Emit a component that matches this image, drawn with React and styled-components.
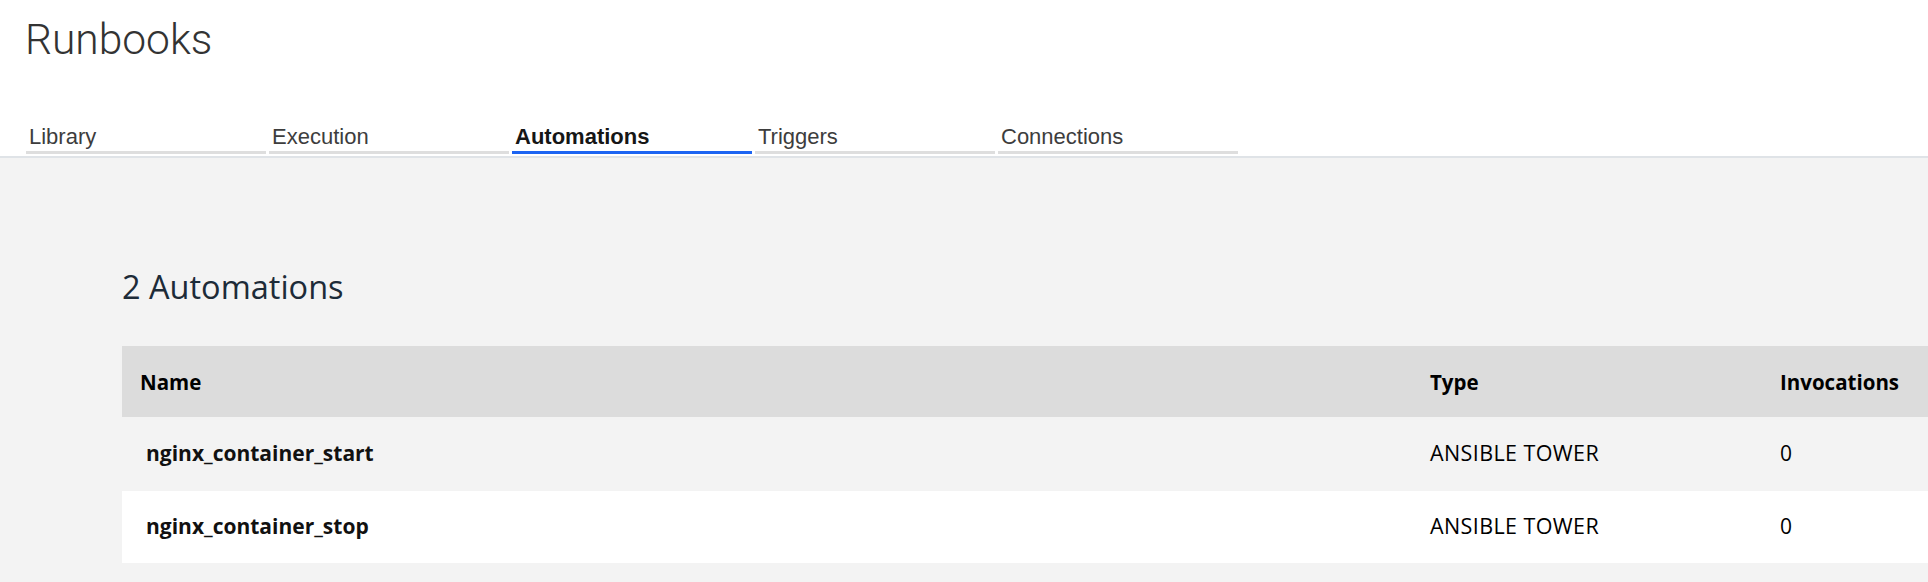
import React from 'react';
import styled, { createGlobalStyle } from 'styled-components';

const GlobalStyle = createGlobalStyle`
  html, body {
    margin: 0;
    padding: 0;
  }
  body {
    min-height: 100vh;
    background: #f3f3f3;
    overflow: hidden;
  }
`;

const Page = styled.div`
  min-height: 100vh;
  background: #f3f3f3;
`;

const Header = styled.header`
  background: #ffffff;
  padding: 16px 0 2px 26px;
  border-bottom: 2px solid #dfe3e7;
`;

const Title = styled.h1`
  margin: 0 0 0 -1px;
  font-family: Roboto, 'Liberation Sans', Arial, sans-serif;
  font-weight: 300;
  font-size: 42.5px;
  line-height: 48px;
  color: #333333;
`;

const TabList = styled.nav`
  display: flex;
  gap: 3px;
  margin-top: 59px;
`;

const Tab = styled.div`
  width: 240px;
  padding: 1px 0 1px 3px;
  box-sizing: border-box;
  border-bottom: 3px solid ${p => (p.active ? '#1c64f2' : '#dedede')};
  font-family: 'Liberation Sans', Arial, sans-serif;
  font-size: 22px;
  line-height: 26px;
  font-weight: ${p => (p.active ? 700 : 400)};
  color: ${p => (p.active ? '#161616' : '#3d3d3d')};
  cursor: pointer;
`;

const Content = styled.main`
  padding: 109px 0 0 122px;
`;

const Heading = styled.h2`
  margin: 0 0 39px;
  font-family: 'Open Sans', sans-serif;
  font-weight: 400;
  font-size: 32.5px;
  line-height: 40px;
  color: #1d2b38;
`;

const Table = styled.div`
  display: grid;
  grid-template-columns: 1290px 350px 1fr;
  font-family: 'Open Sans', sans-serif;
  font-size: 21px;
  line-height: 24px;
`;

const HeadRow = styled.div`
  display: contents;
  & > div {
    background: #dcdcdc;
    height: 71px;
    font-size: 20.5px;
    font-weight: 700;
    color: #161616;
  }
`;

const Row = styled.div`
  display: contents;
  & > div {
    background: ${p => (p.striped ? '#ffffff' : '#f3f3f3')};
    height: ${p => p.h}px;
    padding-bottom: 3px;
    box-sizing: border-box;
    color: #1d2b38;
  }
`;

const Cell = styled.div`
  display: flex;
  align-items: center;
  padding-left: ${p => (p.name ? 24 : 18)}px;
  font-weight: ${p => (p.name ? 700 : 'inherit')};
  color: ${p => (p.name ? '#111111' : 'inherit')} !important;
  white-space: nowrap;
`;

const TypeText = styled.span`
  font-size: 21.5px;
  letter-spacing: 0.4px;
`;

const tabs = ['Library', 'Execution', 'Automations', 'Triggers', 'Connections'];

const automations = [
  { name: 'nginx_container_start', type: 'ANSIBLE TOWER', invocations: 0 },
  { name: 'nginx_container_stop', type: 'ANSIBLE TOWER', invocations: 0 },
];

export default function App() {
  return (
    <Page>
      <GlobalStyle />
      <Header>
        <Title>Runbooks</Title>
        <TabList>
          {tabs.map(t => (
            <Tab key={t} active={t === 'Automations'}>
              {t}
            </Tab>
          ))}
        </TabList>
      </Header>
      <Content>
        <Heading>{automations.length} Automations</Heading>
        <Table>
          <HeadRow>
            <Cell>Name</Cell>
            <Cell>Type</Cell>
            <Cell>Invocations</Cell>
          </HeadRow>
          {automations.map((a, i) => (
            <Row key={a.name} striped={i % 2 === 1} h={i === 0 ? 74 : 72}>
              <Cell name>{a.name}</Cell>
              <Cell>
                <TypeText>{a.type}</TypeText>
              </Cell>
              <Cell>{a.invocations}</Cell>
            </Row>
          ))}
        </Table>
      </Content>
    </Page>
  );
}
